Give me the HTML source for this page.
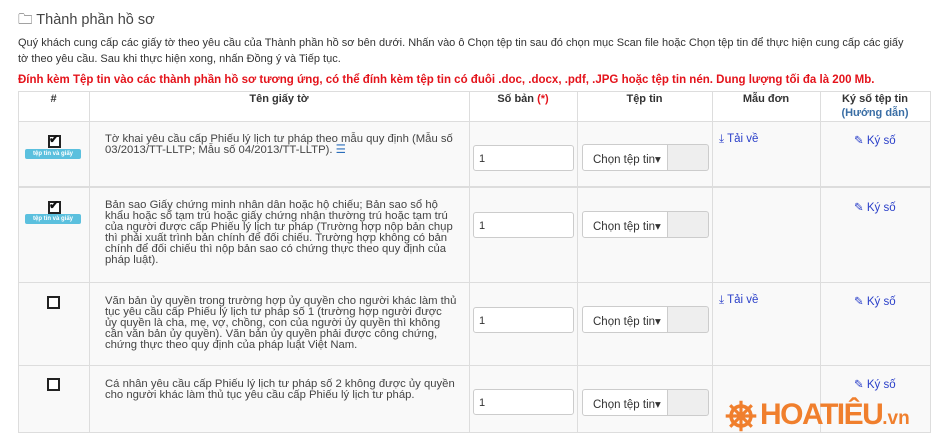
<!DOCTYPE html>
<html><head><meta charset="utf-8"><style>
*{margin:0;padding:0;box-sizing:border-box}
body{width:949px;height:438px;background:#fff;font-family:"Liberation Sans",sans-serif;color:#333;position:relative;overflow:hidden;font-size:11px}
.a{position:absolute}
.t{white-space:nowrap}
.vl{position:absolute;width:1px;background:#ddd}
.hl{position:absolute;height:1px;background:#ddd;left:18px;width:913px}
.row{position:absolute;left:18px;width:913px;background:#f9f9f9}
.inp{position:absolute;width:101px;height:26px;border:1px solid #ccc;border-radius:3px;background:#fff;font-size:11px;padding:7px 0 0 5px;color:#333}
.sel{position:absolute;width:86px;height:27px;border:1px solid #ccc;border-radius:3px 0 0 3px;background:#fff;font-size:11.5px;padding:7px 0 0 10px;color:#333}
.add{position:absolute;width:41px;height:27px;border:1px solid #ccc;border-left:none;border-radius:0 3px 3px 0;background:#eee}
.cb{position:absolute;width:13px;height:13px;border:2px solid #222;background:#fff}
.badge{position:absolute;width:56px;height:10px;background:#5bc0de;color:#fff;font-size:6px;font-weight:bold;text-align:center;line-height:10px;border-radius:2px}
.desc{position:absolute;left:105px;white-space:nowrap;font-size:11.3px;line-height:11.1px;color:#444}
.lnk{position:absolute;color:#2a3fc9;font-size:11.5px;white-space:nowrap}
.hd{position:absolute;font-size:11px;font-weight:bold;color:#333;text-align:center;white-space:nowrap}
</style></head><body>
<div class="a t" style="left:18px;top:9px;font-size:14.5px;color:#444">🗀 Thành phần hồ sơ</div>
<div class="a t" style="left:18px;top:37px;font-size:11px;color:#333">Quý khách cung cấp các giấy tờ theo yêu cầu của Thành phần hồ sơ bên dưới. Nhấn vào ô Chọn tệp tin sau đó chọn mục Scan file hoặc Chọn tệp tin để thực hiện cung cấp các giấy</div>
<div class="a t" style="left:18px;top:53px;font-size:11px;color:#333">tờ theo yêu cầu. Sau khi thực hiện xong, nhấn Đồng ý và Tiếp tục.</div>
<div class="a t" style="left:18px;top:74px;font-size:11.5px;font-weight:bold;color:#e4131b">Đính kèm Tệp tin vào các thành phần hồ sơ tương ứng, có thể đính kèm tệp tin có đuôi .doc, .docx, .pdf, .JPG hoặc tệp tin nén. Dung lượng tối đa là 200 Mb.</div>

<div class="row" style="top:121px;height:312px"></div>
<div class="hl" style="top:91px"></div>
<div class="hl" style="top:121px"></div>
<div class="hl" style="top:186px;height:2px;background:#ddd"></div>
<div class="hl" style="top:282px"></div>
<div class="hl" style="top:365px"></div>
<div class="hl" style="top:432px"></div>
<div class="vl" style="left:18px;top:91px;height:342px"></div>
<div class="vl" style="left:89px;top:91px;height:342px"></div>
<div class="vl" style="left:469px;top:91px;height:342px"></div>
<div class="vl" style="left:577px;top:91px;height:342px"></div>
<div class="vl" style="left:712px;top:91px;height:342px"></div>
<div class="vl" style="left:820px;top:91px;height:342px"></div>
<div class="vl" style="left:930px;top:91px;height:342px"></div>

<div class="hd" style="left:18px;width:71px;top:93px">#</div>
<div class="hd" style="left:89px;width:380px;top:93px">Tên giấy tờ</div>
<div class="hd" style="left:469px;width:108px;top:93px">Số bản <span style="color:#e4131b">(*)</span></div>
<div class="hd" style="left:577px;width:135px;top:93px">Tệp tin</div>
<div class="hd" style="left:712px;width:108px;top:93px">Mẫu đơn</div>
<div class="hd" style="left:820px;width:110px;top:93px">Ký số tệp tin<br><span style="color:#3a6ea5;line-height:16px">(Hướng dẫn)</span></div>

<!-- row1 -->
<div class="cb" style="left:48px;top:135px"><span style="position:absolute;left:-1px;top:-5px;font-size:12px;font-weight:bold;color:#111">✔</span></div>
<div class="badge" style="left:25px;top:149px">tệp tin và giấy</div>
<div class="desc" style="top:134px">Tờ khai yêu cầu cấp Phiếu lý lịch tư pháp theo mẫu quy định (Mẫu số<br>03/2013/TT-LLTP; Mẫu số 04/2013/TT-LLTP). <span style="color:#2a6ebb">☰</span></div>
<div class="inp" style="left:473px;top:145px">1</div>
<div class="sel" style="left:582px;top:144px">Chọn tệp tin▾</div><div class="add" style="left:668px;top:144px"></div>
<div class="lnk" style="left:719px;top:133px">⤓ Tải về</div>
<div class="lnk" style="left:854px;top:133px">✎ Ký số</div>

<!-- row2 -->
<div class="cb" style="left:48px;top:201px"><span style="position:absolute;left:-1px;top:-5px;font-size:12px;font-weight:bold;color:#111">✔</span></div>
<div class="badge" style="left:25px;top:214px">tệp tin và giấy</div>
<div class="desc" style="top:200px">Bản sao Giấy chứng minh nhân dân hoặc hộ chiếu; Bản sao sổ hộ<br>khẩu hoặc sổ tạm trú hoặc giấy chứng nhận thường trú hoặc tạm trú<br>của người được cấp Phiếu lý lịch tư pháp (Trường hợp nộp bản chụp<br>thì phải xuất trình bản chính để đối chiếu. Trường hợp không có bản<br>chính để đối chiếu thì nộp bản sao có chứng thực theo quy định của<br>pháp luật).</div>
<div class="inp" style="left:473px;top:212px">1</div>
<div class="sel" style="left:582px;top:211px">Chọn tệp tin▾</div><div class="add" style="left:668px;top:211px"></div>
<div class="lnk" style="left:854px;top:200px">✎ Ký số</div>

<!-- row3 -->
<div class="cb" style="left:47px;top:296px"></div>
<div class="desc" style="top:296px">Văn bản ủy quyền trong trường hợp ủy quyền cho người khác làm thủ<br>tục yêu cầu cấp Phiếu lý lịch tư pháp số 1 (trường hợp người được<br>ủy quyền là cha, mẹ, vợ, chồng, con của người ủy quyền thì không<br>cần văn bản ủy quyền). Văn bản ủy quyền phải được công chứng,<br>chứng thực theo quy định của pháp luật Việt Nam.</div>
<div class="inp" style="left:473px;top:307px">1</div>
<div class="sel" style="left:582px;top:306px">Chọn tệp tin▾</div><div class="add" style="left:668px;top:306px"></div>
<div class="lnk" style="left:719px;top:294px">⤓ Tải về</div>
<div class="lnk" style="left:854px;top:294px">✎ Ký số</div>

<!-- row4 -->
<div class="cb" style="left:47px;top:378px"></div>
<div class="desc" style="top:379px">Cá nhân yêu cầu cấp Phiếu lý lịch tư pháp số 2 không được ủy quyền<br>cho người khác làm thủ tục yêu cầu cấp Phiếu lý lịch tư pháp.</div>
<div class="inp" style="left:473px;top:389px">1</div>
<div class="sel" style="left:582px;top:389px">Chọn tệp tin▾</div><div class="add" style="left:668px;top:389px"></div>
<div class="lnk" style="left:854px;top:377px">✎ Ký số</div>

<!-- logo -->
<svg class="a" style="left:723px;top:398px" width="36" height="36" viewBox="0 0 40 40"><g stroke="#f07f2d" fill="none" stroke-width="4"><circle cx="20" cy="20" r="11"/><circle cx="20" cy="20" r="3"/><path d="M20 3V37M3 20H37M8 8L32 32M32 8L8 32" stroke-width="3.5"/></g></svg>
<div class="a t" style="left:760px;top:397px;font-size:30px;font-weight:bold;color:#f07f2d;letter-spacing:-1.5px;line-height:36px">HOATIÊU<span style="font-size:19px;letter-spacing:0">.vn</span></div>
</body></html>
